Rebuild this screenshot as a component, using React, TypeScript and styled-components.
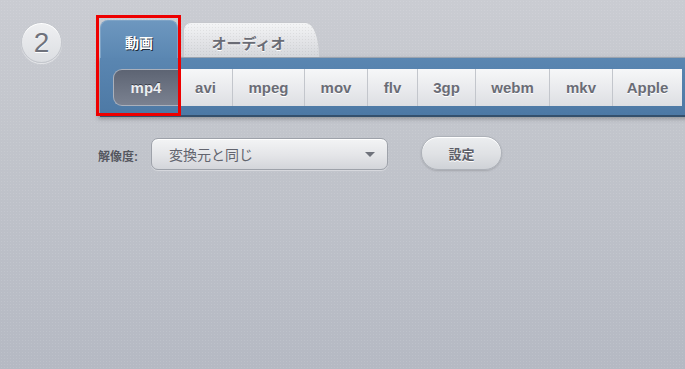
import React from "react";
import styled, { createGlobalStyle } from "styled-components";

const GlobalStyle = createGlobalStyle`
  html, body { margin: 0; padding: 0; }
  body { font-family: "Liberation Sans", "Noto Sans CJK JP", sans-serif; }
`;

const Page = styled.div`
  position: relative;
  width: 685px;
  height: 369px;
  overflow: hidden;
  background-color: #bdc0c8;
  background-image:
    radial-gradient(rgba(255, 255, 255, 0.10) 0.8px, transparent 1px),
    linear-gradient(180deg, #caccd2 0%, #c1c4cb 40%, #b5b9c3 100%);
  background-size: 3px 3px, 100% 100%;
  display: flex;
  align-items: flex-start;
  padding: 20px 0 0 21px;
  box-sizing: border-box;
`;

const StepBadge = styled.div`
  flex: none;
  width: 41px;
  height: 41px;
  margin-top: 2px;
  border-radius: 50%;
  box-sizing: border-box;
  border: 1px solid #c4c7cd;
  background: linear-gradient(180deg, #eff0f2 0%, #dcdee2 100%);
  box-shadow: 0 1px 1px rgba(255, 255, 255, 0.6), inset 0 1px 0 #fff;
  display: flex;
  align-items: center;
  justify-content: center;
  font-size: 28px;
  color: #6f727c;
  text-shadow: 0 1px 0 #fff;
  line-height: 1;
`;

const Main = styled.div`
  flex: 1;
  margin-left: 38px;
  display: flex;
  flex-direction: column;
  min-width: 0;
`;

const TabRow = styled.div`
  display: flex;
  align-items: flex-end;
  height: 37px;
  position: relative;
  z-index: 2;
`;

const ActiveTab = styled.div`
  width: 78px;
  height: 38px;
  margin-bottom: -1px;
  box-sizing: border-box;
  border-radius: 8px 8px 0 0;
  background: linear-gradient(180deg, #6d97bf 0%, #5b87b2 100%);
  border: 1px solid #7ea3c6;
  border-bottom: none;
  display: flex;
  justify-content: center;
  padding-top: 11px;
  font-size: 14px;
  font-weight: bold;
  color: #fff;
  text-shadow: 1px 1px 0 #1e2a38;
`;

const Tab = styled.div`
  width: 137px;
  height: 35px;
  margin-left: 5px;
  box-sizing: border-box;
  border-radius: 8px 14px 0 0 / 8px 34px 0 0;
  background-color: #e6e7ea;
  background-image:
    radial-gradient(rgba(0, 0, 0, 0.06) 0.8px, transparent 1px),
    linear-gradient(180deg, #f4f5f6 0%, #e4e5e8 50%, #d6d8dc 100%);
  background-size: 3px 3px, 100% 100%;
  border: 1px solid #c6c8cd;
  border-bottom: none;
  display: flex;
  justify-content: center;
  padding: 9px 6px 0 0;
  font-size: 15px;
  font-weight: bold;
  color: #6a6c75;
  text-shadow: 0 1px 0 #fff;
`;

const Band = styled.div`
  border-top: 1px solid #9aa3ae;
  border-bottom: 2px solid #34506d;
  background: linear-gradient(180deg, #5a86b1 0%, #4d79a5 100%);
  padding: 11px 0 9px 13px;
  box-shadow: -2px 2px 4px rgba(0, 0, 0, 0.25);
  width: 600px;
`;

const FormatBar = styled.div`
  display: flex;
  height: 37px;
`;

const FormatButton = styled.div<{ $active?: boolean; $w: number }>`
  flex: none;
  width: ${(p) => p.$w}px;
  box-sizing: border-box;
  display: flex;
  align-items: center;
  justify-content: center;
  font-size: 15px;
  font-weight: bold;
  border-left: 1px solid #c3c6cc;
  color: ${(p) => (p.$active ? "#eceef1" : "#6a6c76")};
  text-shadow: ${(p) => (p.$active ? "0 -1px 0 #3b414c" : "0 1px 0 #fff")};
  background: ${(p) =>
    p.$active
      ? "linear-gradient(180deg, #5d6473 0%, #6c7382 50%, #7a8190 100%)"
      : "linear-gradient(180deg, #f6f7f8 0%, #eaebee 50%, #dddfe3 100%)"};
  ${(p) =>
    p.$active &&
    `border: 1px solid #aab0bb; border-right: none; border-radius: 9px 0 0 9px;`}
`;

const OptionsRow = styled.div`
  display: flex;
  align-items: center;
  margin: 19px 0 0 -2px;
`;

const Label = styled.span`
  font-size: 12px;
  font-weight: bold;
  color: #55575f;
  margin-top: 4px;
  width: 53px;
`;

const Select = styled.div`
  box-sizing: border-box;
  width: 237px;
  height: 32px;
  margin-top: 2px;
  border-radius: 7px;
  border: 1px solid #9ea2aa;
  background: linear-gradient(180deg, #f3f4f5 0%, #e4e5e8 55%, #d3d5da 100%);
  box-shadow: inset 0 1px 0 #fff, 0 1px 1px rgba(255, 255, 255, 0.4);
  display: flex;
  align-items: center;
  justify-content: space-between;
  padding: 0 12px 0 17px;
  font-size: 14px;
  color: #62646e;
`;

const Caret = styled.span`
  width: 0;
  height: 0;
  border-left: 5px solid transparent;
  border-right: 5px solid transparent;
  border-top: 5px solid #6f727b;
`;

const SettingsButton = styled.div`
  box-sizing: border-box;
  width: 81px;
  height: 34px;
  margin-left: 33px;
  border-radius: 17px;
  border: 1px solid #aeb2b9;
  background: linear-gradient(180deg, #eceef0 0%, #dfe1e4 55%, #cfd2d7 100%);
  box-shadow: inset 0 1px 0 #fff, 0 1px 2px rgba(0, 0, 0, 0.15);
  display: flex;
  align-items: center;
  justify-content: center;
  font-size: 13px;
  font-weight: bold;
  color: #5e6068;
  text-shadow: 0 1px 0 #fff;
`;

const Highlight = styled.div`
  position: absolute;
  left: 96px;
  top: 15px;
  width: 85px;
  height: 101px;
  box-sizing: border-box;
  border: 3px solid #ee0000;
  pointer-events: none;
  z-index: 5;
`;

const formats: { name: string; width: number }[] = [
  { name: "mp4", width: 65 },
  { name: "avi", width: 54 },
  { name: "mpeg", width: 72 },
  { name: "mov", width: 63 },
  { name: "flv", width: 50 },
  { name: "3gp", width: 58 },
  { name: "webm", width: 74 },
  { name: "mkv", width: 63 },
  { name: "Apple", width: 70 },
];

export default function App() {
  return (
    <>
      <GlobalStyle />
      <Page>
        <StepBadge>2</StepBadge>
        <Main>
          <TabRow>
            <ActiveTab>動画</ActiveTab>
            <Tab>オーディオ</Tab>
          </TabRow>
          <Band>
            <FormatBar>
              {formats.map((f, i) => (
                <FormatButton key={f.name} $w={f.width} $active={i === 0}>
                  {f.name}
                </FormatButton>
              ))}
            </FormatBar>
          </Band>
          <OptionsRow>
            <Label>解像度:</Label>
            <Select>
              <span>変換元と同じ</span>
              <Caret />
            </Select>
            <SettingsButton>設定</SettingsButton>
          </OptionsRow>
        </Main>
        <Highlight />
      </Page>
    </>
  );
}
